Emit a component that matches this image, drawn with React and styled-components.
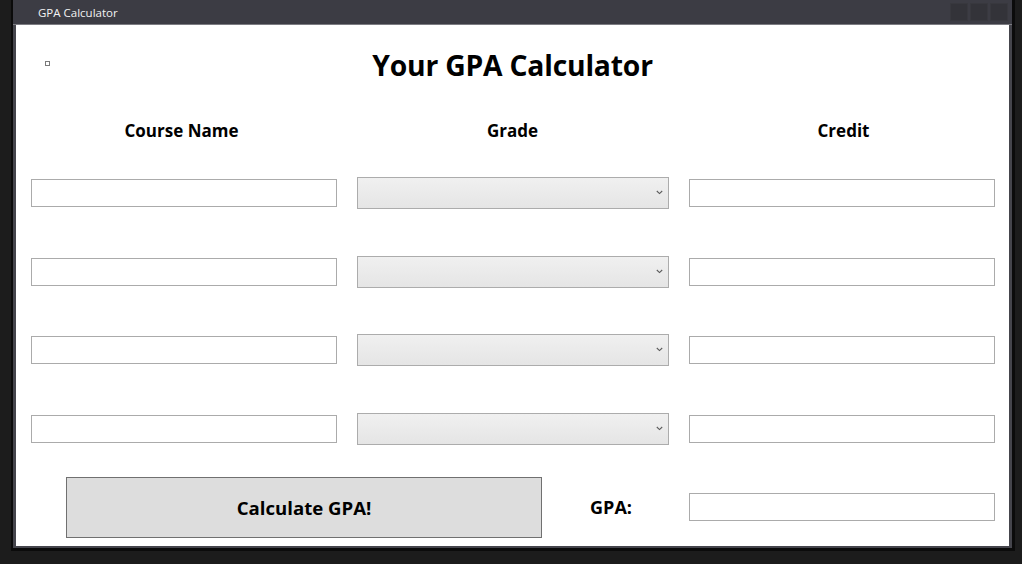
import React from "react";
import styled, { createGlobalStyle } from "styled-components";

const Global = createGlobalStyle`
  html, body { margin: 0; padding: 0; background: #1c1c1c; }
  body { font-family: "Open Sans", "Noto Sans", sans-serif; }
  * { box-sizing: border-box; }
`;

const Page = styled.div`
  height: 564px;
  background: #1c1c1c;
  padding-left: 11px;
`;

const Window = styled.div`
  width: 1004px;
  height: 551px;
  display: flex;
  flex-direction: column;
  border-left: 2px solid #0b0b0b;
  border-right: 3px solid #0b0b0b;
  border-bottom: 3px solid #0b0b0b;
  background: #45454c;
`;

const TitleBar = styled.div`
  height: 25px;
  flex: none;
  display: flex;
  align-items: center;
  background: #3c3c44;
  border-bottom: 1px solid #7c7c82;
  padding-left: 25px;
  padding-right: 4px;
`;

const TitleText = styled.span`
  color: #f2f2f2;
  font-family: "Open Sans", sans-serif;
  font-size: 11.5px;
  line-height: 1;
  margin-top: 1px;
  flex: 1;
`;

const Controls = styled.div`
  display: flex;
  gap: 2px;
  align-self: flex-start;
  margin-top: 3px;
`;

const ControlBox = styled.div`
  width: 18px;
  height: 18px;
  background: #333339;
  border: 1px solid #38383e;
`;

const Frame = styled.div`
  flex: 1;
  padding: 0 3px 2px 3px;
  display: flex;
`;

const Content = styled.div`
  flex: 1;
  background: #ffffff;
  display: grid;
  grid-template-rows: 80px 49px repeat(4, 78.5px) 78px;
`;

const Header = styled.div`
  position: relative;
  display: flex;
  align-items: center;
  justify-content: center;
`;

const AppIcon = styled.div`
  position: absolute;
  left: 29px;
  top: 36px;
  width: 5px;
  height: 5px;
  border: 1px solid #7a7a7a;
  background: #fff;
`;

const Title = styled.h1`
  margin: 0;
  font-family: "Open Sans", sans-serif;
  font-weight: 700;
  font-size: 28.3px;
  color: #000;
  letter-spacing: -0.2px;
`;

const Row = styled.div`
  display: grid;
  grid-template-columns: 1fr 1fr 1fr;
  align-items: center;
`;

const Cell = styled.div`
  display: flex;
  align-items: center;
  justify-content: center;
  padding-left: ${(p) => (p.$pos === "left" ? "15px" : p.$pos === "mid" ? "10px" : "11px")};
  padding-right: ${(p) => (p.$pos === "left" ? "10px" : p.$pos === "mid" ? "9px" : "14px")};
`;

const ColHead = styled.div`
  width: 100%;
  text-align: center;
  font-family: "Open Sans", sans-serif;
  font-weight: 700;
  font-size: 17px;
  color: #000;
  margin-top: 1px;
`;

const TextBox = styled.input`
  width: 100%;
  height: 28px;
  border: 1px solid #ababab;
  background: #fff;
  outline: none;
  padding: 0 4px;
  font-family: "Open Sans", sans-serif;
  font-size: 13px;
`;

const SelectWrap = styled.div`
  position: relative;
  width: 100%;
  height: 32px;
`;

const Select = styled.select`
  appearance: none;
  -webkit-appearance: none;
  width: 100%;
  height: 32px;
  border: 1px solid #acacac;
  background: linear-gradient(#f0f0f0, #e5e5e5);
  border-radius: 0;
  outline: none;
  font-family: "Open Sans", sans-serif;
  font-size: 13px;
`;

const Chevron = styled.svg`
  position: absolute;
  right: 6px;
  top: 13px;
  pointer-events: none;
`;

const BottomRow = styled.div`
  display: grid;
  grid-template-columns: 2fr 1fr;
  align-items: center;
`;

const BottomLeft = styled.div`
  display: flex;
  align-items: center;
  padding-left: 50px;
`;

const CalcButton = styled.button`
  width: 476px;
  height: 61px;
  background: #dddddd;
  border: 1px solid #707070;
  font-family: "Open Sans", sans-serif;
  font-weight: 700;
  font-size: 18.6px;
  color: #000;
  padding: 0;
  margin-top: 1px;
`;

const GpaLabel = styled.div`
  flex: 1;
  text-align: center;
  font-family: "Open Sans", sans-serif;
  font-weight: 700;
  font-size: 18px;
  color: #000;
  padding-left: 2px;
`;

const rows = [0, 1, 2, 3];

function GradeSelect() {
  return (
    <SelectWrap>
      <Select defaultValue="">
        <option value=""></option>
        <option>A</option>
        <option>B</option>
        <option>C</option>
        <option>D</option>
        <option>F</option>
      </Select>
      <Chevron width="7" height="5" viewBox="0 0 7 5">
        <path d="M0.8 1 L3.5 3.6 L6.2 1" fill="none" stroke="#5a5a5a" strokeWidth="1.1" />
      </Chevron>
    </SelectWrap>
  );
}

export default function App() {
  return (
    <Page>
      <Global />
      <Window>
        <TitleBar>
          <TitleText>GPA Calculator</TitleText>
          <Controls>
            <ControlBox />
            <ControlBox />
            <ControlBox />
          </Controls>
        </TitleBar>
        <Frame>
          <Content>
            <Header>
              <AppIcon />
              <Title>Your GPA Calculator</Title>
            </Header>
            <Row>
              <ColHead>Course Name</ColHead>
              <ColHead>Grade</ColHead>
              <ColHead>Credit</ColHead>
            </Row>
            {rows.map((r) => (
              <Row key={r}>
                <Cell $pos="left"><TextBox /></Cell>
                <Cell $pos="mid"><GradeSelect /></Cell>
                <Cell $pos="right"><TextBox /></Cell>
              </Row>
            ))}
            <BottomRow>
              <BottomLeft>
                <CalcButton>Calculate GPA!</CalcButton>
                <GpaLabel>GPA:</GpaLabel>
              </BottomLeft>
              <Cell $pos="right"><TextBox readOnly /></Cell>
            </BottomRow>
          </Content>
        </Frame>
      </Window>
    </Page>
  );
}
